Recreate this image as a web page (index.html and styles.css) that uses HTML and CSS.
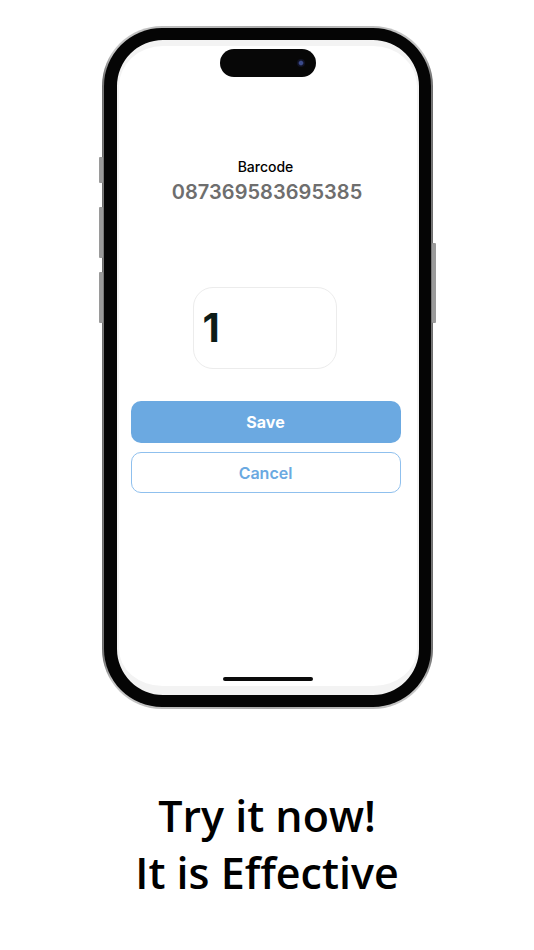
FILE: index.html
```html
<!DOCTYPE html>
<html>
<head>
<meta charset="utf-8">
<link rel="stylesheet" href="styles.css">
</head>
<body>
<div class="stage">
  <div class="phone">
    <span class="side-btn silent"></span>
    <span class="side-btn vol-up"></span>
    <span class="side-btn vol-down"></span>
    <span class="side-btn power"></span>
    <div class="bezel">
      <div class="screen">
        <div class="island"><span class="cam"></span></div>
        <div class="content">
          <div class="label">Barcode</div>
          <div class="code">087369583695385</div>
          <div class="qty"><span>1</span></div>
          <div class="btn save">Save</div>
          <div class="btn cancel">Cancel</div>
        </div>
        <div class="home"></div>
      </div>
    </div>
  </div>
  <div class="tagline">
    <div>Try it now!</div>
    <div>It is Effective</div>
  </div>
</div>
</body>
</html>
```
FILE: styles.css
```css
* { box-sizing: border-box; }
html, body { margin: 0; padding: 0; background: #fff; }
body { width: 534px; height: 950px; overflow: hidden; }
.stage {
  display: flex;
  flex-direction: column;
  align-items: center;
  padding-top: 26px;
}
.phone {
  position: relative;
  width: 331px;
  height: 683px;
  border-radius: 60px;
  background: linear-gradient(90deg, #6a6a6a, #c8c8c8 3%, #a8a8a8 50%, #c8c8c8 97%, #6a6a6a);
  padding: 2px;
}
.side-btn {
  position: absolute;
  width: 4px;
  background: #9a9a9a;
  border-radius: 1px;
}
.silent { left: -3px; top: 131px; height: 26px; }
.vol-up { left: -3px; top: 181px; height: 51px; }
.vol-down { left: -3px; top: 246px; height: 51px; }
.power { right: -3px; top: 217px; height: 80px; }
.bezel {
  width: 100%;
  height: 100%;
  background: #050505;
  border-radius: 58px;
  padding: 12px 12px 12px 13px;
}
.screen {
  position: relative;
  width: 100%;
  height: 100%;
  background: #fff;
  border-radius: 46px;
  border-style: solid;
  border-color: #f3f3f3;
  border-width: 6px 2px 9px 2px;
  display: flex;
  flex-direction: column;
  align-items: center;
}
.island {
  position: absolute;
  top: 3px;
  left: 50%;
  margin-left: -48px;
  width: 96px;
  height: 28px;
  border-radius: 14px;
  background: #070707;
}
.cam {
  position: absolute;
  right: 11px;
  top: 10px;
  width: 8px;
  height: 8px;
  border-radius: 50%;
  background: radial-gradient(circle, #3a4a8a 0 30%, #12142a 50%, #0a0a10 100%);
}
.content {
  width: 100%;
  display: flex;
  flex-direction: column;
  align-items: center;
  padding: 112px 15px 0 11px;
  font-family: Inter, "Liberation Sans", sans-serif;
}
.label {
  font-size: 14px;
  line-height: 17px;
  font-weight: 500;
  color: #000;
}
.code {
  font-size: 20px;
  line-height: 24px;
  font-weight: 600;
  color: #6e6e6e;
  margin-top: 5px;
  margin-left: 3px;
  letter-spacing: 0.05px;
}
.qty {
  margin-top: 83px;
  width: 144px;
  height: 82px;
  border: 1px solid #ececec;
  border-radius: 20px;
  align-self: center;
  margin-left: -2px;
  padding: 16px 0 0 9px;
}
.qty span {
  font-size: 40px;
  line-height: 48px;
  font-weight: 700;
  color: #0d1c18;
}
.btn {
  width: 270px;
  height: 42px;
  border-radius: 10px;
  display: flex;
  align-items: center;
  justify-content: center;
  font-size: 16px;
  font-weight: 700;
}
.save {
  margin-top: 32px;
  background: #6ba9e1;
  color: #fff;
}
.cancel {
  margin-top: 9px;
  height: 41px;
  border: 1px solid #8fc0ee;
  color: #6ba9e1;
  background: #fff;
  font-weight: 600;
}
.home {
  position: absolute;
  bottom: 5px;
  left: 50%;
  margin-left: -45px;
  width: 90px;
  height: 4px;
  border-radius: 2px;
  background: #0a0a0a;
}
.tagline {
  margin-top: 78px;
  font-family: "Open Sans", "Noto Sans", sans-serif;
  font-weight: 600;
  font-size: 43px;
  line-height: 57px;
  color: #000;
  text-align: center;
}
```
